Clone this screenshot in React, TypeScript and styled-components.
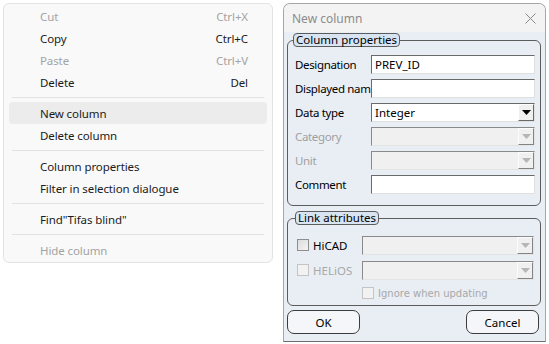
import styled, { createGlobalStyle } from 'styled-components';

const GlobalStyle = createGlobalStyle`
  html, body { margin: 0; padding: 0; background: #ffffff; }
  body { font-family: "Noto Sans", "Open Sans", sans-serif; font-size: 11.5px; color: #1b1b1b; }
  * { box-sizing: border-box; }
`;

type MenuEntry = { label?: string; shortcut?: string; disabled?: boolean; active?: boolean; sep?: boolean };

const menuEntries: MenuEntry[] = [
  { label: 'Cut', shortcut: 'Ctrl+X', disabled: true },
  { label: 'Copy', shortcut: 'Ctrl+C' },
  { label: 'Paste', shortcut: 'Ctrl+V', disabled: true },
  { label: 'Delete', shortcut: 'Del' },
  { sep: true },
  { label: 'New column', active: true },
  { label: 'Delete column' },
  { sep: true },
  { label: 'Column properties' },
  { label: 'Filter in selection dialogue' },
  { sep: true },
  { label: 'Find"Tifas blind"' },
  { sep: true },
  { label: 'Hide column', disabled: true },
];

const ArrowDown = ({ disabled }: { disabled?: boolean }) => (
  <svg width="9" height="5" viewBox="0 0 9 5">
    <path d="M0 0 H9 L4.5 5 Z" fill={disabled ? '#a8a8a8' : '#000'} />
  </svg>
);

const CloseIcon = () => (
  <svg width="11" height="11" viewBox="0 0 11 11">
    <path d="M0.5 0.5 L10.5 10.5 M10.5 0.5 L0.5 10.5" stroke="#8a8a8a" strokeWidth="1" />
  </svg>
);

const Combo = ({ value, disabled }: { value?: string; disabled?: boolean }) => (
  <ComboBox $disabled={disabled}>
    <ComboText>{value}</ComboText>
    <ComboButton $disabled={disabled}>
      <ArrowDown disabled={disabled} />
    </ComboButton>
  </ComboBox>
);

const App = () => {
  return (
    <Page>
      <GlobalStyle />
      <Menu>
        {menuEntries.map((e, i) =>
          e.sep ? (
            <Separator key={i} />
          ) : (
            <MenuItem key={i} $disabled={e.disabled} $active={e.active}>
              <span>{e.label}</span>
              {e.shortcut && <span>{e.shortcut}</span>}
            </MenuItem>
          )
        )}
      </Menu>

      <Dialog>
        <TitleBar>
          <Title>New column</Title>
          <CloseIcon />
        </TitleBar>
        <DialogBody>
          <Group>
            <Legend>Column properties</Legend>
            <FieldGrid>
              <FieldLabel>Designation</FieldLabel>
              <TextBox>PREV_ID</TextBox>
              <FieldLabel>Displayed nam</FieldLabel>
              <TextBox />
              <FieldLabel>Data type</FieldLabel>
              <Combo value="Integer" />
              <FieldLabel $disabled>Category</FieldLabel>
              <Combo disabled />
              <FieldLabel $disabled>Unit</FieldLabel>
              <Combo disabled />
              <FieldLabel>Comment</FieldLabel>
              <TextBox />
            </FieldGrid>
          </Group>

          <Group $link>
            <Legend>Link attributes</Legend>
            <LinkGrid>
              <CheckRow>
                <CheckBox />
                <CheckLabel>HiCAD</CheckLabel>
              </CheckRow>
              <Combo disabled />
              <CheckRow>
                <CheckBox $disabled />
                <CheckLabel $disabled>HELiOS</CheckLabel>
              </CheckRow>
              <Combo disabled />
              <span />
              <CheckRow>
                <CheckBox $disabled />
                <IgnoreLabel>Ignore when updating</IgnoreLabel>
              </CheckRow>
            </LinkGrid>
          </Group>

          <ButtonRow>
            <DialogButton>OK</DialogButton>
            <DialogButton>Cancel</DialogButton>
          </ButtonRow>
        </DialogBody>
      </Dialog>
    </Page>
  );
};

const Page = styled.div`
  display: flex;
  align-items: flex-start;
  padding: 3px 0 0 3px;
  width: 549px;
  height: 344px;
  overflow: hidden;
`;

const Menu = styled.div`
  width: 270px;
  background: #f9f9f9;
  border: 1px solid #e3e3e3;
  border-radius: 6px;
  padding: 1px 5px 1px 5px;
  display: flex;
  flex-direction: column;
`;

const MenuItem = styled.div<{ $disabled?: boolean; $active?: boolean }>`
  height: 22px;
  display: flex;
  align-items: center;
  justify-content: space-between;
  padding: 0 19px 0 31px;
  border-radius: 4px;
  font-size: 11.5px;
  letter-spacing: -0.1px;
  color: ${(p) => (p.$disabled ? '#a3a3a3' : '#1b1b1b')};
  background: ${(p) => (p.$active ? '#ececec' : 'transparent')};
`;

const Separator = styled.div`
  height: 1px;
  background: #e2e2e2;
  margin: 4px 3px 4px 3px;
`;

const Dialog = styled.div`
  margin-left: 10px;
  width: 263px;
  height: 339px;
  border: 1px solid #a6a6a6;
  border-bottom-color: #6e6e6e;
  border-radius: 7px 7px 0 0;
  background: #e9eef4;
  display: flex;
  flex-direction: column;
  overflow: hidden;
`;

const TitleBar = styled.div`
  height: 28px;
  background: #f3f3f3;
  display: flex;
  align-items: center;
  justify-content: space-between;
  padding: 0 9px 0 8px;
`;

const Title = styled.span`
  color: #8c8c8c;
  font-size: 12px;
`;

const DialogBody = styled.div`
  flex: 1;
  display: flex;
  flex-direction: column;
  padding: 1px 4px 0 3px;
`;

const Group = styled.fieldset<{ $link?: boolean }>`
  margin: ${(p) => (p.$link ? '5px 0 0 0' : '0')};
  padding: ${(p) => (p.$link ? '11px 6px 5px 9px' : '8px 5px 11px 7px')};
  border: 1px solid #5c5c5c;
  border-radius: 6px;
  min-width: 0;
`;

const Legend = styled.legend`
  margin-left: -2px;
  padding: 0 2px 0 2px;
  height: 14px;
  line-height: 12px;
  border: 1px solid #5c5c5c;
  border-radius: 4px;
  background: #d8e4f2;
  color: #000;
`;

const FieldGrid = styled.div`
  display: grid;
  grid-template-columns: 76px 1fr;
  grid-auto-rows: 19px;
  row-gap: 5px;
  align-items: center;
`;

const FieldLabel = styled.span<{ $disabled?: boolean }>`
  color: ${(p) => (p.$disabled ? '#a0a0a0' : '#000')};
  white-space: nowrap;
  letter-spacing: -0.35px;
`;

const TextBox = styled.div`
  height: 19px;
  background: #fff;
  border: 1px solid;
  border-color: #6a6a6a #e0e0e0 #e0e0e0 #6a6a6a;
  padding: 0 3px;
  line-height: 17px;
  color: #000;
`;

const ComboBox = styled.div<{ $disabled?: boolean }>`
  height: 19px;
  display: flex;
  background: ${(p) => (p.$disabled ? '#f0f0f0' : '#fff')};
  border: 1px solid;
  border-color: ${(p) => (p.$disabled ? '#8a8a8a #e4e4e4 #e4e4e4 #8a8a8a' : '#6a6a6a #e0e0e0 #e0e0e0 #6a6a6a')};
`;

const ComboText = styled.span`
  flex: 1;
  padding: 0 3px;
  line-height: 17px;
  color: #000;
`;

const ComboButton = styled.div<{ $disabled?: boolean }>`
  width: 16px;
  display: flex;
  align-items: center;
  justify-content: center;
  background: #f0f0f0;
  border: 1px solid;
  border-color: #ffffff #6a6a6a #6a6a6a #ffffff;
  opacity: ${(p) => (p.$disabled ? 0.8 : 1)};
`;

const LinkGrid = styled.div`
  display: grid;
  grid-template-columns: 65px 1fr;
  grid-template-rows: 18px 18px 14px;
  row-gap: 7px;
  align-items: center;
`;

const CheckRow = styled.div`
  display: flex;
  align-items: center;
  gap: 4px;
`;

const CheckBox = styled.span<{ $disabled?: boolean }>`
  width: 12px;
  height: 12px;
  border: 1px solid ${(p) => (p.$disabled ? '#c4c4c4' : '#8e8e8e')};
  background: ${(p) => (p.$disabled ? '#f2f2f2' : 'linear-gradient(135deg, #dcdcdc, #f4f4f4)')};
`;

const CheckLabel = styled.span<{ $disabled?: boolean }>`
  color: ${(p) => (p.$disabled ? '#a8a8a8' : '#000')};
`;

const IgnoreLabel = styled.span`
  font-family: "DejaVu Sans", sans-serif;
  font-size: 10px;
  color: #a8a8a8;
`;

const ButtonRow = styled.div`
  display: flex;
  justify-content: space-between;
  margin-top: 4px;
  padding: 0 2px 0 0;
`;

const DialogButton = styled.div`
  width: 73px;
  height: 24px;
  display: flex;
  align-items: center;
  justify-content: center;
  border: 1px solid #3c3c3c;
  border-radius: 7px;
  background: #f4f6f9;
  color: #000;
`;

export default App;
